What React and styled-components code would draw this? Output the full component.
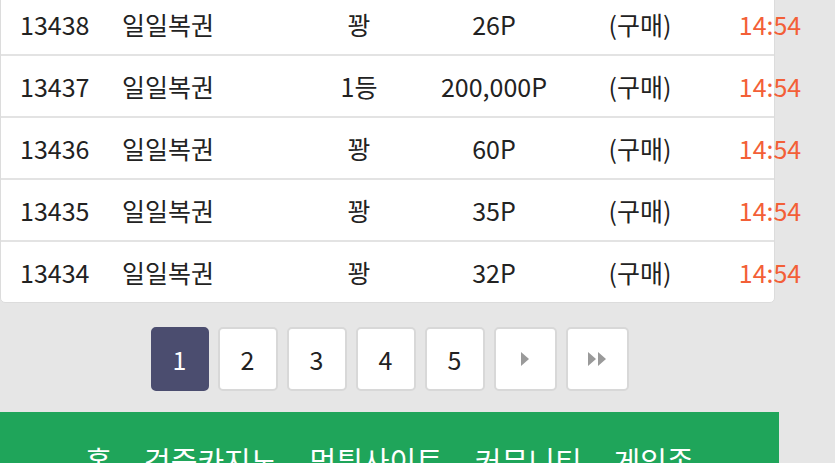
import React from 'react';
import styled, { createGlobalStyle } from 'styled-components';

const GlobalStyle = createGlobalStyle`
  html, body {
    margin: 0;
    padding: 0;
    background: #e6e6e6;
    overflow: hidden;
  }
  body {
    font-family: "Noto Sans CJK KR", "Noto Sans", sans-serif;
    color: #222;
  }
`;

const Page = styled.div`
  width: 779px;
`;

const Card = styled.div`
  box-sizing: border-box;
  width: 775px;
  margin-top: -7px;
  background: #fff;
  border: 1px solid #dcdcdc;
  border-radius: 5px;
`;

const Row = styled.div`
  display: grid;
  grid-template-columns: 121px 178px 118px 152px 140px 120px;
  align-items: center;
  height: 60px;
  border-bottom: 2px solid #e3e3e3;

  &:last-child {
    border-bottom: none;
  }
`;

const Cell = styled.div`
  font-size: 25px;
  line-height: 1;
  white-space: nowrap;
  text-align: ${props => props.align || 'left'};
  padding-left: ${props => props.pad || 0}px;
  color: ${props => (props.hot ? '#f35f37' : '#222')};
`;

const Pagination = styled.div`
  display: flex;
  justify-content: center;
  gap: 9px;
  margin: 24px 0 21px;
`;

const PageButton = styled.div`
  box-sizing: border-box;
  width: ${props => (props.wide ? 63 : props.active ? 58 : 60)}px;
  height: 64px;
  display: flex;
  align-items: center;
  justify-content: center;
  border: 2px solid ${props => (props.active ? '#4b4d6f' : '#d8d8d8')};
  border-radius: 5px;
  background: ${props => (props.active ? '#4b4d6f' : '#fff')};
  color: ${props => (props.active ? '#fff' : '#222')};
  font-size: 25px;
`;

const Footer = styled.div`
  height: 60px;
  background: #1fa55a;
  display: flex;
  justify-content: center;
  gap: 32px;
  padding-top: 28px;
`;

const FooterLink = styled.span`
  color: #fff;
  font-size: 29px;
  line-height: 1.4;
`;

const rows = [
  { no: 13438, prize: '꽝', point: '26P' },
  { no: 13437, prize: '1등', point: '200,000P' },
  { no: 13436, prize: '꽝', point: '60P' },
  { no: 13435, prize: '꽝', point: '35P' },
  { no: 13434, prize: '꽝', point: '32P' },
];

const Next = () => (
  <svg width="10" height="16" viewBox="0 0 10 16">
    <path d="M1 1 L9 8 L1 15 Z" fill="#9a9a9a" />
  </svg>
);

const Last = () => (
  <svg width="21" height="16" viewBox="0 0 21 16">
    <path d="M1 1 L9 8 L1 15 Z M11 1 L19 8 L11 15 Z" fill="#9a9a9a" />
  </svg>
);

export default function App() {
  return (
    <Page>
      <GlobalStyle />
      <Card>
        {rows.map(r => (
          <Row key={r.no}>
            <Cell pad={19}>{r.no}</Cell>
            <Cell>일일복권</Cell>
            <Cell align="center">{r.prize}</Cell>
            <Cell align="center">{r.point}</Cell>
            <Cell align="center">(구매)</Cell>
            <Cell align="center" hot>14:54</Cell>
          </Row>
        ))}
      </Card>
      <Pagination>
        <PageButton active>1</PageButton>
        <PageButton>2</PageButton>
        <PageButton>3</PageButton>
        <PageButton>4</PageButton>
        <PageButton>5</PageButton>
        <PageButton wide><Next /></PageButton>
        <PageButton wide><Last /></PageButton>
      </Pagination>
      <Footer>
        <FooterLink>홈</FooterLink>
        <FooterLink>검증카지노</FooterLink>
        <FooterLink>먹튀사이트</FooterLink>
        <FooterLink>커뮤니티</FooterLink>
        <FooterLink>게임존</FooterLink>
      </Footer>
    </Page>
  );
}
